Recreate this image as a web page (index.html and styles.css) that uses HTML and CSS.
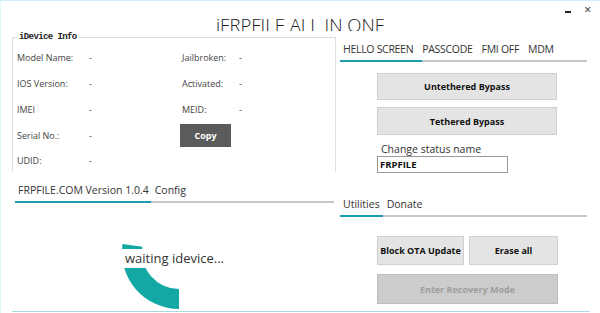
FILE: index.html
```html
<!DOCTYPE html>
<html lang="en">
<head>
    <meta charset="UTF-8">
    <meta name="viewport" content="width=device-width, initial-scale=1.0">
    <title>iFRPFILE ALL IN ONE</title>
    <link rel="stylesheet" href="styles.css">
</head>
<body>
    <div class="window">
        <header class="titlebar">
            <span></span>
            <h1 class="app-title">iFRPFILE ALL IN ONE</h1>
            <div class="win-controls">
                <span class="win-min"></span>
                <span class="win-close">&#215;</span>
            </div>
        </header>
        <div class="main">
            <section class="left">
                <fieldset class="device-info">
                    <legend>iDevice Info</legend>
                    <div class="info-grid">
                        <span>Model Name:</span><span>-</span>
                        <span>Jailbroken:</span><span>-</span>
                        <span>IOS Version:</span><span>-</span>
                        <span>Activated:</span><span>-</span>
                        <span>IMEI</span><span>-</span>
                        <span>MEID:</span><span>-</span>
                        <span>Serial No.:</span><span>-</span>
                        <span class="copy-cell"><button class="btn-dark">Copy</button></span>
                        <span>UDID:</span><span>-</span>
                    </div>
                </fieldset>
                <div class="tabs tabs-left">
                    <span>FRPFILE.COM Version 1.0.4</span>
                    <span>Config</span>
                </div>
                <div class="tab-bar"><span class="tab-active" style="width: 136px"></span></div>
                <div class="status-panel">
                    <div class="spinner">
                        <svg width="60" height="70" viewBox="0 0 60 70">
                            <path d="M1.55 3.07 A57 57 0 0 0 58 68 L58 48 A37 37 0 0 1 21.36 5.85 Z" fill="#14a8a4"/>
                        </svg>
                        <span class="spinner-label">waiting idevice...</span>
                    </div>
                </div>
            </section>
            <section class="right">
                <div class="tabs tabs-right">
                    <span>HELLO SCREEN</span>
                    <span>PASSCODE</span>
                    <span>FMI OFF</span>
                    <span>MDM</span>
                </div>
                <div class="tab-bar"><span class="tab-active" style="width: 82px"></span></div>
                <div class="bypass-panel">
                    <button class="btn">Untethered Bypass</button>
                    <button class="btn">Tethered Bypass</button>
                    <label class="status-label" for="statusName">Change status name</label>
                    <input class="status-input" id="statusName" type="text" value="FRPFILE">
                </div>
                <div class="tabs tabs-util">
                    <span>Utilities</span>
                    <span>Donate</span>
                </div>
                <div class="tab-bar"><span class="tab-active" style="width: 43px"></span></div>
                <div class="util-panel">
                    <div class="btn-row">
                        <button class="btn btn-ota">Block OTA Update</button>
                        <button class="btn btn-erase">Erase all</button>
                    </div>
                    <button class="btn btn-disabled" disabled>Enter Recovery Mode</button>
                </div>
            </section>
        </div>
    </div>
</body>
</html>
```

FILE: styles.css
```css
* {
    box-sizing: border-box;
}
body {
    margin: 0;
    background: #fff;
    font-family: "Open Sans", "Noto Sans", sans-serif;
    color: #333;
}
.window {
    width: 600px;
    height: 313px;
    border-top: 1px solid #c9eff6;
    border-left: 1px solid #e3f6f9;
    overflow: hidden;
}
.titlebar {
    height: 30px;
    display: grid;
    grid-template-columns: 1fr auto 1fr;
    overflow: hidden;
}
.app-title {
    margin: 0;
    padding-top: 12px;
    font-size: 18.5px;
    font-weight: 300;
    line-height: 24px;
    color: #222;
}
.win-controls {
    display: flex;
    justify-content: flex-end;
    align-items: flex-start;
    gap: 13px;
    padding-right: 9px;
}
.win-min {
    width: 6px;
    height: 2px;
    background: #222;
    margin-top: 10px;
}
.win-close {
    font-size: 12px;
    line-height: 14px;
    margin-top: 2px;
    color: #222;
}
.main {
    display: flex;
    gap: 4px;
    margin-left: 11px;
    width: 578px;
    height: 281px;
    border-bottom: 1px solid #a9d9e2;
}
.left {
    width: 324px;
}
.right {
    width: 248px;
    padding-top: 6px;
}
.device-info {
    margin: 1px 0 0;
    padding: 0 4px;
    height: 140px;
    border: 1px solid #dedede;
    border-bottom: none;
}
.device-info legend {
    padding: 0 2px;
    font-family: "Liberation Mono", monospace;
    font-weight: bold;
    font-size: 9px;
    letter-spacing: -0.6px;
    line-height: 10px;
    color: #222;
}
.info-grid {
    display: grid;
    grid-template-columns: 72px 93px 57px 1fr;
    grid-auto-rows: 25.75px;
    align-items: center;
    padding-top: 3px;
    font-size: 9px;
    color: #444;
}
.copy-cell {
    grid-column: 3 / span 2;
    margin-left: -2px;
}
.btn-dark {
    width: 51px;
    height: 23px;
    border: none;
    background: #5b5b5b;
    color: #fff;
    font-family: inherit;
    font-weight: bold;
    font-size: 9px;
}
.tabs {
    display: flex;
    align-items: center;
    height: 23px;
    font-size: 10.5px;
    color: #333;
}
.tabs-left {
    margin-top: 6px;
    padding-left: 6px;
    gap: 6px;
}
.tabs-right {
    padding-left: 3px;
    gap: 9px;
    letter-spacing: -0.3px;
}
.tabs-util {
    margin-top: 20px;
    height: 22px;
    padding-left: 3px;
    gap: 7px;
}
.tab-bar {
    height: 2px;
    background: #c8c8c8;
    display: flex;
}
.left .tab-bar {
    margin-left: 3px;
    width: 319px;
}
.right .tab-bar {
    width: 247px;
}
.tab-active {
    background: #1c9eb0;
}
.status-panel {
    height: 108px;
    padding: 38px 0 0 109px;
}
.spinner {
    position: relative;
    width: 60px;
    height: 70px;
}
.spinner svg {
    display: block;
}
.spinner-label {
    position: absolute;
    left: 1px;
    top: 8px;
    height: 19px;
    padding: 0 3px;
    background: #fff;
    font-size: 13px;
    line-height: 19px;
    color: #333;
    white-space: nowrap;
}
.bypass-panel {
    height: 111px;
    overflow: hidden;
    padding: 11px 0 0 37px;
    display: flex;
    flex-direction: column;
    align-items: flex-start;
}
.btn {
    width: 180px;
    height: 29px;
    border: 1px solid #d0d0d0;
    background: #e4e4e4;
    color: #111;
    font-family: inherit;
    font-weight: bold;
    font-size: 9px;
    padding: 0;
}
.bypass-panel .btn + .btn {
    margin-top: 7px;
}
.status-label {
    margin: 7px 0 0 4px;
    font-size: 10.5px;
    line-height: 14px;
    color: #333;
}
.status-input {
    width: 131px;
    height: 18px;
    margin-top: 0;
    padding: 0 2px;
    border: 1px solid #9a9a9a;
    font-family: inherit;
    font-weight: bold;
    font-size: 9.5px;
    color: #111;
}
.util-panel {
    padding: 19px 0 0 37px;
}
.btn-row {
    display: flex;
    gap: 5px;
}
.btn-ota {
    width: 87px;
}
.btn-erase {
    width: 89px;
}
.btn-disabled {
    width: 181px;
    height: 30px;
    margin-top: 9px;
    background: #cccccc;
    border-color: #bdbdbd;
    color: #9e9e9e;
}
```
